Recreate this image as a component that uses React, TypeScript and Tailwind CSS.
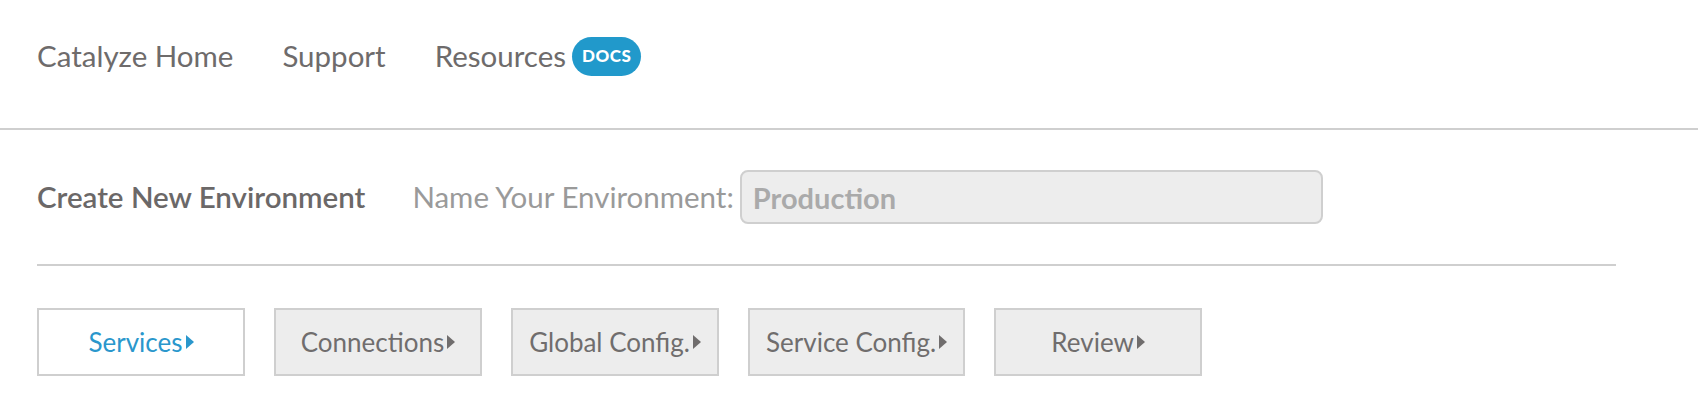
import React from 'react';

const TABS = ['Services', 'Connections', 'Global Config.', 'Service Config.', 'Review'];

function Caret({ className }: { className: string }) {
  return (
    <svg width="8" height="14" viewBox="0 0 8 14" className={className}>
      <path d="M0 0 L8 7 L0 14 Z" fill="currentColor" />
    </svg>
  );
}

export default function App() {
  const active = 0;

  return (
    <div className="w-[1698px] h-[414px] bg-white font-['Lato',sans-serif] text-[#6e6b6b]">
      <nav className="h-[130px] border-b-2 border-[#cfcfcf] flex items-center gap-[49px] pl-[37px] pb-[16px] text-[29.5px]">
        <a>Catalyze Home</a>
        <a>Support</a>
        <a className="flex items-center gap-[6px]">
          Resources
          <span className="h-[39px] px-[10px] rounded-full bg-[#2199cb] text-white text-[17px] font-black flex items-center tracking-[0.5px]">
            DOCS
          </span>
        </a>
      </nav>

      <div className="pl-[37px]">
        <div className="w-[1579px] h-[136px] border-b-2 border-[#cfcfcf] flex items-center">
          <h2 className="text-[29.5px] font-semibold text-[#6b6868]">Create New Environment</h2>
          <label className="ml-[47px] text-[29.5px] text-[#9a9a9a]">Name Your Environment:</label>
          <input
            readOnly
            placeholder="Production"
            className="ml-[6px] w-[583px] h-[54px] rounded-[8px] border-2 border-[#cfcfcf] bg-[#ededed] px-[11px] text-[29px] font-bold placeholder:text-[#aaaaaa] outline-none"
          />
        </div>

        <div className="mt-[42px] flex gap-[29px]">
          {TABS.map((tab, i) => (
            <button
              key={tab}
              className={
                i === active
                  ? 'min-w-[208px] h-[68px] px-[16px] border-2 border-[#cfcfcf] bg-white text-[#2a97cc] text-[26px] flex items-center justify-center gap-[3px]'
                  : 'min-w-[208px] h-[68px] px-[16px] border-2 border-[#cfcfcf] bg-[#ededed] text-[#706d6d] text-[26px] flex items-center justify-center gap-[3px]'
              }
            >
              {tab}
              <Caret className="shrink-0" />
            </button>
          ))}
        </div>
      </div>
    </div>
  );
}
